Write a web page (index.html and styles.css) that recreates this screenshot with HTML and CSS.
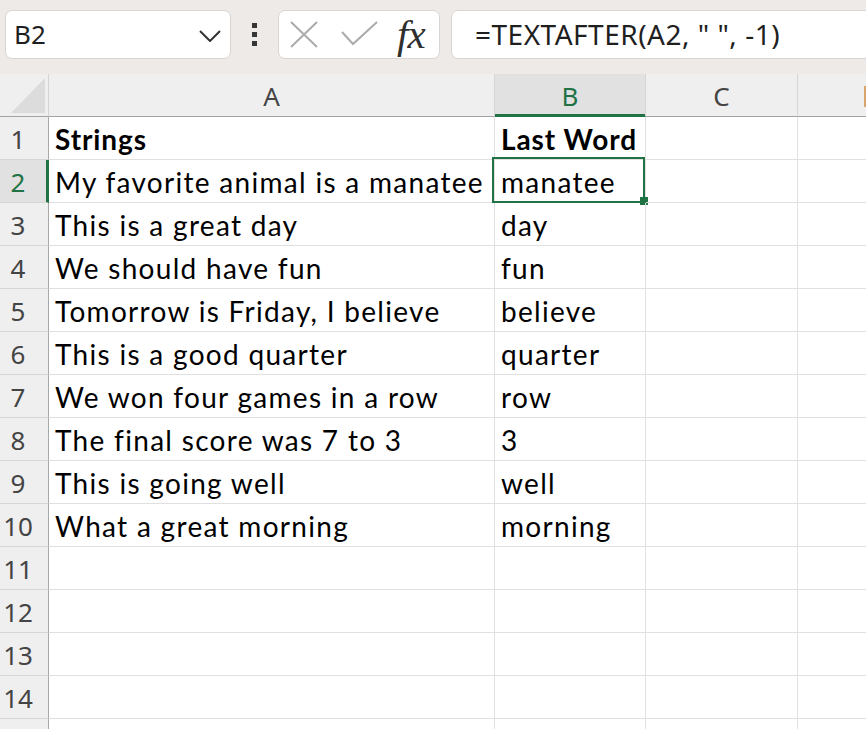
FILE: index.html
```html
<!DOCTYPE html>
<html>
<head>
<meta charset="utf-8">
<link rel="stylesheet" href="styles.css">
</head>
<body>
<div class="toolbar">
  <div class="namebox">
    <span class="namebox-text">B2</span>
    <svg class="chev" width="22" height="12" viewBox="0 0 22 12"><polyline points="1,1 11,11 21,1" fill="none" stroke="#333" stroke-width="2"/></svg>
  </div>
  <div class="dots"><i></i><i></i><i></i></div>
  <div class="fbtns">
    <svg class="ico-x" width="28" height="27" viewBox="0 0 28 27"><path d="M1 1 L27 26 M27 1 L1 26" stroke="#ababab" stroke-width="2" fill="none"/></svg>
    <svg class="ico-check" width="37" height="25" viewBox="0 0 37 25"><polyline points="1,11 12,23 36,1" fill="none" stroke="#ababab" stroke-width="2"/></svg>
    <span class="fx">fx</span>
  </div>
  <div class="formula">=TEXTAFTER(A2, " ", -1)</div>
</div>
<div class="sheet">
  <div class="corner"></div>
  <div class="ch">A</div>
  <div class="ch ch-sel">B</div>
  <div class="ch">C</div>
  <div class="ch ch-d"></div>

  <div class="rh">1</div><div class="c b">Strings</div><div class="c b">Last Word</div><div class="c"></div><div class="c last"></div>
  <div class="rh rh-sel">2</div><div class="c">My favorite animal is a manatee</div><div class="c active">manatee</div><div class="c"></div><div class="c last"></div>
  <div class="rh">3</div><div class="c">This is a great day</div><div class="c">day</div><div class="c"></div><div class="c last"></div>
  <div class="rh">4</div><div class="c">We should have fun</div><div class="c">fun</div><div class="c"></div><div class="c last"></div>
  <div class="rh">5</div><div class="c">Tomorrow is Friday, I believe</div><div class="c">believe</div><div class="c"></div><div class="c last"></div>
  <div class="rh">6</div><div class="c">This is a good quarter</div><div class="c">quarter</div><div class="c"></div><div class="c last"></div>
  <div class="rh">7</div><div class="c">We won four games in a row</div><div class="c">row</div><div class="c"></div><div class="c last"></div>
  <div class="rh">8</div><div class="c">The final score was 7 to 3</div><div class="c">3</div><div class="c"></div><div class="c last"></div>
  <div class="rh">9</div><div class="c">This is going well</div><div class="c">well</div><div class="c"></div><div class="c last"></div>
  <div class="rh">10</div><div class="c">What a great morning</div><div class="c">morning</div><div class="c"></div><div class="c last"></div>
  <div class="rh">11</div><div class="c"></div><div class="c"></div><div class="c"></div><div class="c last"></div>
  <div class="rh">12</div><div class="c"></div><div class="c"></div><div class="c"></div><div class="c last"></div>
  <div class="rh">13</div><div class="c"></div><div class="c"></div><div class="c"></div><div class="c last"></div>
  <div class="rh">14</div><div class="c"></div><div class="c"></div><div class="c"></div><div class="c last"></div>
  <div class="rh"></div><div class="c"></div><div class="c"></div><div class="c"></div><div class="c last"></div>
</div>
</body>
</html>
```
FILE: styles.css
```css
* { box-sizing: border-box; margin: 0; padding: 0; }
html, body { width: 866px; height: 729px; overflow: hidden; background: #fff; }
body { font-family: "Noto Sans", "Open Sans", sans-serif; color: #222; }

.toolbar {
  height: 74px;
  background: #eeeae8;
  display: flex;
  align-items: flex-start;
  padding-top: 10px;
  padding-left: 5px;
}
.namebox {
  width: 226px;
  height: 49px;
  background: #fff;
  border: 1px solid #d9d5d2;
  border-radius: 7px;
  display: flex;
  align-items: center;
  justify-content: space-between;
  padding: 0 9px 0 8px;
}
.namebox-text { font-size: 26px; color: #1f1f1f; line-height: 47px; }
.chev { display: block; margin-top: 2px; }

.dots {
  width: 47px;
  height: 49px;
  display: flex;
  flex-direction: column;
  align-items: center;
  justify-content: center;
  gap: 4px;
}
.dots i { display: block; width: 5px; height: 5px; background: #363636; }

.fbtns {
  width: 162px;
  height: 49px;
  background: #fff;
  border: 1px solid #d9d5d2;
  border-radius: 7px;
  display: flex;
  align-items: center;
  padding-left: 11px;
}
.ico-x { display: block; }
.ico-check { display: block; margin-left: 23px; margin-top: -3px; }
.fx {
  font-family: "Liberation Serif", "DejaVu Serif", serif;
  font-style: italic;
  font-size: 41px;
  color: #2f2f2f;
  margin-left: 19px;
  line-height: 47px;
  letter-spacing: -1px;
}

.formula {
  flex: 1;
  height: 49px;
  margin-left: 11px;
  margin-right: -12px;
  background: #fff;
  border: 1px solid #d9d5d2;
  border-radius: 7px;
  padding-left: 23px;
  font-size: 28px;
  letter-spacing: 0.5px;
  line-height: 46px;
  color: #1f1f1f;
  white-space: nowrap;
}

.sheet {
  display: grid;
  grid-template-columns: 49px 446px 151px 152px 1fr;
  grid-auto-rows: 43px;
}

.corner {
  position: relative;
  background: #efefef;
  border-right: 1px solid #d4d4d4;
  border-bottom: 1px solid #a3a3a3;
}
.corner::after {
  content: "";
  position: absolute;
  left: 11px;
  top: 4px;
  width: 34px;
  height: 35px;
  background: #dcdcdc;
  clip-path: polygon(100% 0, 100% 100%, 0 100%);
}

.ch {
  background: #efefef;
  border-right: 1px solid #d6d6d6;
  border-bottom: 1px solid #a3a3a3;
  text-align: center;
  font-size: 26px;
  line-height: 42px;
  padding-top: 1px;
  color: #444;
}
.ch-sel {
  background: #e1e1e1;
  color: #217346;
  border-bottom-color: #217346;
  box-shadow: inset 0 -2px 0 #217346;
}
.ch-d { position: relative; border-right: none; }
.ch-d::before {
  content: "";
  position: absolute;
  left: 66px;
  top: 12px;
  width: 3px;
  height: 21px;
  background: #d9a56c;
}

.rh {
  background: #efefef;
  border-right: 1px solid #a8a8a8;
  border-bottom: 1px solid #d6d6d6;
  text-align: center;
  padding-right: 12px;
  padding-top: 1px;
  font-size: 26px;
  line-height: 42px;
  color: #444;
}
.rh-sel {
  background: #e1e1e1;
  color: #217346;
  border-right: 3px solid #217346;
  padding-right: 10px;
}

.c {
  position: relative;
  border-right: 1px solid #e0e0e0;
  border-bottom: 1px solid #e0e0e0;
  font-family: Lato, "Liberation Sans", sans-serif;
  font-size: 28px;
  letter-spacing: 1.3px;
  line-height: 42px;
  padding-left: 6px;
  padding-top: 1px;
  white-space: nowrap;
  color: #000;
}
.c.last { border-right: none; }
.c.b { font-weight: bold; letter-spacing: 0.9px; }

.active::before {
  content: "";
  position: absolute;
  left: -3px;
  top: -3px;
  right: 0;
  bottom: -1px;
  border: 2px solid #217346;
  pointer-events: none;
}
.active::after {
  content: "";
  position: absolute;
  right: -3px;
  bottom: -3px;
  width: 8px;
  height: 8px;
  background: #217346;
}
```
